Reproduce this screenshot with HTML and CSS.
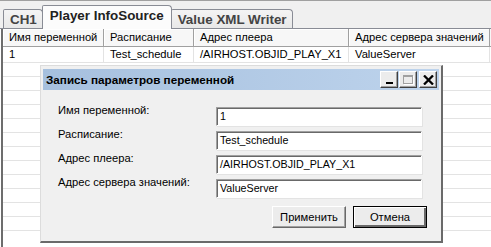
FILE: index.html
```html
<!DOCTYPE html>
<html lang="ru">
<head>
<meta charset="utf-8">
<link rel="stylesheet" href="styles.css">
</head>
<body>
<div class="page">
  <div class="tabs">
    <div class="tab">CH1</div>
    <div class="tab active">Player InfoSource</div>
    <div class="tab">Value XML Writer</div>
  </div>
  <div class="grid">
    <div class="row head">
      <div class="cell">Имя переменной</div>
      <div class="cell">Расписание</div>
      <div class="cell">Адрес плеера</div>
      <div class="cell">Адрес сервера значений</div>
    </div>
    <div class="row data">
      <div class="cell">1</div>
      <div class="cell">Test_schedule</div>
      <div class="cell">/AIRHOST.OBJID_PLAY_X1</div>
      <div class="cell">ValueServer</div>
    </div>
    <div class="row empty"></div>
    <div class="row empty"></div>
    <div class="row empty"></div>
    <div class="row empty"></div>
    <div class="row empty"></div>
    <div class="row empty"></div>
    <div class="row empty"></div>
    <div class="row empty"></div>
    <div class="row empty"></div>
    <div class="row empty"></div>
    <div class="row empty"></div>
    <div class="row empty"></div>

    <div class="dialog">
      <div class="titlebar">
        <span class="title">Запись параметров переменной</span>
        <div class="capbtns">
          <div class="capbtn min"><span class="minbar"></span></div>
          <div class="capbtn max disabled"><span class="maxbox"></span></div>
          <div class="capbtn close">
            <svg width="11" height="10" viewBox="0 0 11 10"><path d="M1 0.5 L10 9.5 M10 0.5 L1 9.5" stroke="#000" stroke-width="2.3" fill="none"/></svg>
          </div>
        </div>
      </div>
      <div class="body">
        <div class="form">
          <label class="lbl">Имя переменной:</label>
          <div class="input">1</div>
          <label class="lbl">Расписание:</label>
          <div class="input">Test_schedule</div>
          <label class="lbl">Адрес плеера:</label>
          <div class="input">/AIRHOST.OBJID_PLAY_X1</div>
          <label class="lbl">Адрес сервера значений:</label>
          <div class="input">ValueServer</div>
        </div>
        <div class="buttons">
          <div class="btn">Применить</div>
          <div class="btn default">Отмена</div>
        </div>
      </div>
    </div>
  </div>
</div>
</body>
</html>
```
FILE: styles.css
```css
* { box-sizing: border-box; }
html, body { margin: 0; padding: 0; }
body {
  width: 491px;
  height: 247px;
  overflow: hidden;
  background: #ffffff;
  font-family: "Liberation Sans", Arial, sans-serif;
  font-size: 11px;
  color: #000;
}
.page { width: 491px; height: 247px; overflow: hidden; }

.tabs {
  height: 29px;
  background: #f0f0f0;
  border-top: 1px solid #a0a0a0;
  border-bottom: 1px solid #898c95;
  display: flex;
  align-items: flex-end;
  padding-left: 3px;
}
.tab {
  height: 19px;
  padding: 0 5px 0 6px;
  border: 1px solid #898c95;
  border-bottom: none;
  border-radius: 2px 4px 0 0;
  background: linear-gradient(#f4f4f4, #e8e8e8);
  font-weight: bold;
  font-size: 13.4px;
  color: #444;
  line-height: 19px;
  margin-right: -1px;
}
.tab.active {
  height: 24px;
  margin-bottom: -1px;
  background: #fcfcfc;
  color: #222;
  padding: 0 7px 0 7px;
  line-height: 20px;
  position: relative;
  z-index: 1;
}

.grid {
  position: relative;
  height: 218px;
  margin-left: 1px;
  border-left: 2px solid #6d6d6d;
  overflow: hidden;
  font-size: 11.2px;
}
.row {
  display: grid;
  grid-template-columns: 101px 90px 155px 141px;
  border-bottom: 1px solid #e3e3e3;
}
.row.head {
  height: 18px;
  background: #f7f7f7;
  border-bottom: 1px solid #a0a0a0;
}
.row.head .cell {
  border-right: 1px solid #a0a0a0;
  box-shadow: inset 1px 1px 0 #ffffff;
  line-height: 17px;
}
.row.data { height: 16px; }
.row.data .cell {
  border-right: 1px solid #e3e3e3;
  line-height: 15px;
}
.row.empty { height: 14px; }
.cell {
  padding-left: 6px;
  white-space: nowrap;
  overflow: hidden;
}

.dialog {
  position: absolute;
  left: 37px;
  top: 36px;
  width: 403px;
  height: 178px;
  background: #f0f0f0;
  border-style: solid;
  border-width: 1px 2px 2px 1px;
  border-color: #dcdcdc #6a6a6a #6a6a6a #dcdcdc;
  padding: 3px 2px 0 2px;
  display: flex;
  flex-direction: column;
}
.titlebar {
  height: 21px;
  background: linear-gradient(to right, #a6c0de, #bdd3ec);
  display: flex;
  align-items: center;
  justify-content: space-between;
  padding: 0 2px 0 3px;
}
.title {
  font-weight: bold;
  font-size: 11.7px;
  color: #000;
}
.capbtns { display: flex; gap: 1px; }
.capbtn {
  width: 18px;
  height: 17px;
  background: #ececec;
  border-style: solid;
  border-width: 1px;
  border-color: #ffffff #404040 #404040 #ffffff;
  box-shadow: inset -1px -1px 0 #a0a0a0;
  display: flex;
  align-items: center;
  justify-content: center;
  position: relative;
}
.capbtn.close { margin-left: 1px; }
.minbar {
  width: 7px;
  height: 2px;
  background: #000;
  margin-top: 7px;
}
.maxbox {
  width: 10px;
  height: 9px;
  border: 1px solid #a0a0a0;
  border-top-width: 2px;
  box-shadow: 1px 1px 0 #ffffff;
}

.body {
  flex: 1;
  padding: 17px 12px 0 15px;
  display: flex;
  flex-direction: column;
}
.form {
  display: grid;
  grid-template-columns: 158px 206px;
  grid-auto-rows: 19px;
  row-gap: 5px;
}
.lbl {
  font-size: 11.2px;
  line-height: 14px;
  margin-top: -4px;
}
.input {
  height: 19px;
  background: #fff;
  border-style: solid;
  border-width: 1px;
  border-color: #a0a0a0 #ffffff #ffffff #a0a0a0;
  box-shadow: inset 1px 1px 0 #696969, 1px 1px 0 #e3e3e3;
  font-size: 10.7px;
  line-height: 17px;
  padding-left: 3px;
  white-space: nowrap;
}
.buttons {
  display: flex;
  justify-content: flex-end;
  gap: 7px;
  margin-top: 8px;
}
.btn {
  width: 74px;
  height: 22px;
  background: #ececec;
  border-style: solid;
  border-width: 1px;
  border-color: #ffffff #696969 #696969 #ffffff;
  box-shadow: inset -1px -1px 0 #a0a0a0;
  font-size: 11.2px;
  line-height: 20px;
  text-align: center;
}
.btn.default {
  border: 1px solid #000;
  box-shadow: inset 1px 1px 0 #ffffff, inset -2px -2px 0 #696969;
}
```
